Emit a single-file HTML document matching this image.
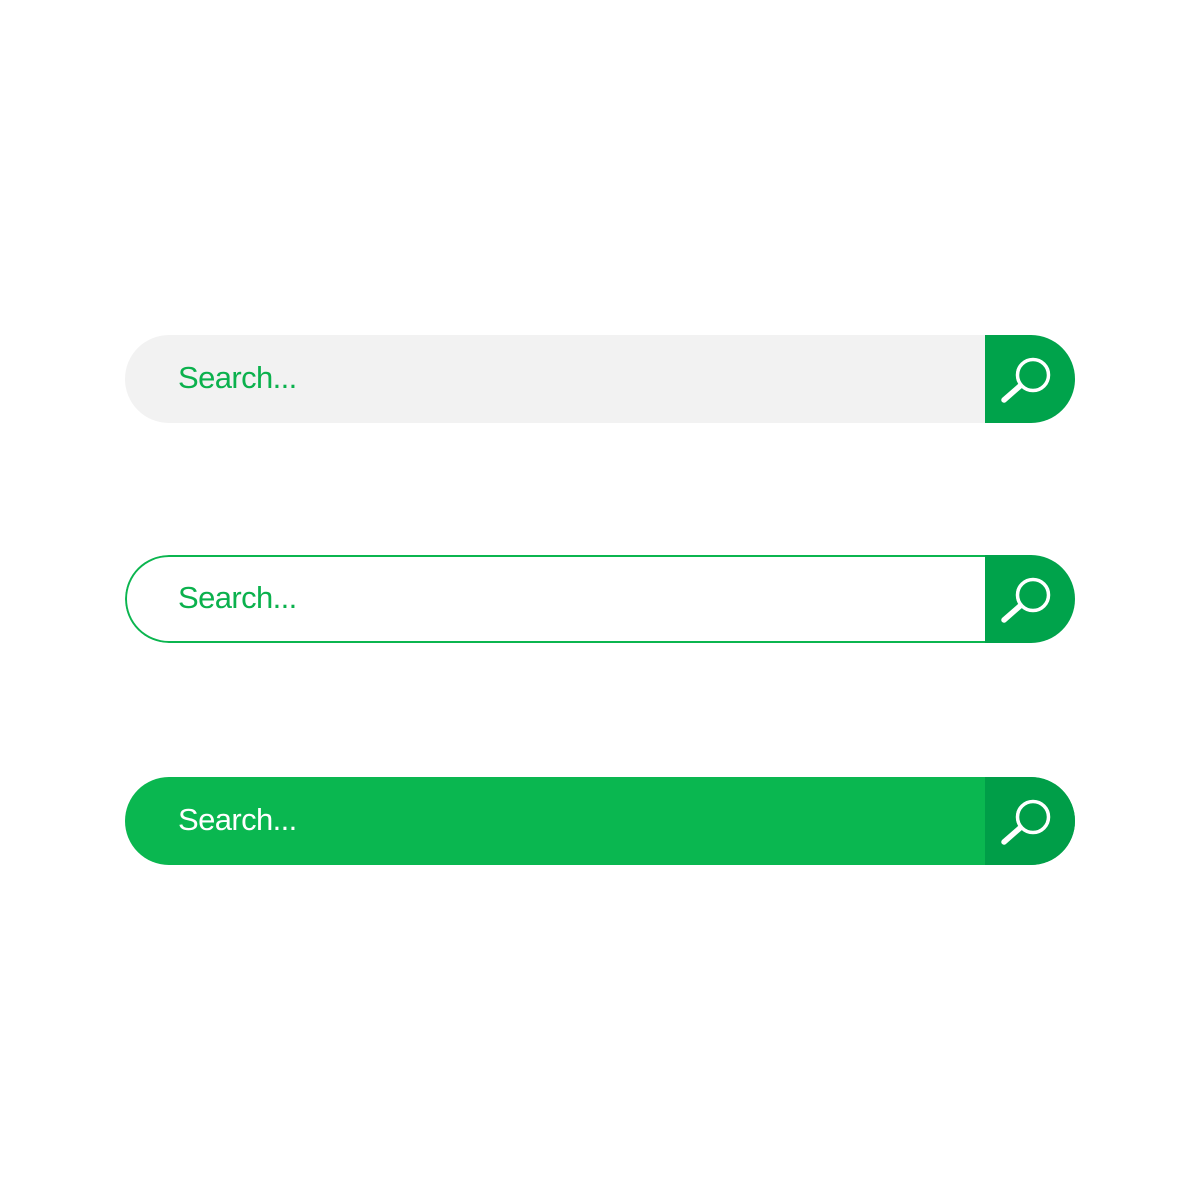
<!DOCTYPE html>
<html><head><style>
body{margin:0;width:1200px;height:1200px;background:#fff;position:relative;font-family:"Liberation Sans",sans-serif}
.bar{position:absolute;left:125px;width:950px;height:88px;border-radius:44px;overflow:hidden;box-sizing:border-box}
.t{position:absolute;left:53px;top:23px;font-size:31px;line-height:40px;letter-spacing:-0.6px}
.btn{position:absolute;right:0;top:0;width:90px;height:100%;background:#00a34b}
.btn svg{position:absolute;left:0;top:0}
.ol{position:absolute;left:0;top:0;width:862px;height:88px;box-sizing:border-box;border:2px solid #0bb54f;border-right:none;border-radius:44px 0 0 44px}
</style></head><body>
<div class="bar" style="top:335px;background:#f2f2f2"><span class="t" style="color:#0bb14d">Search...</span>
<div class="btn"><svg width="90" height="88"><circle cx="48" cy="40" r="15.5" fill="none" stroke="#fff" stroke-width="3.5"/><line x1="19" y1="65" x2="35" y2="51" stroke="#fff" stroke-width="5.5" stroke-linecap="round"/></svg></div></div>
<div class="bar" style="top:555px;background:#fff"><div class="ol"></div><span class="t" style="color:#0bb14d">Search...</span>
<div class="btn"><svg width="90" height="88"><circle cx="48" cy="40" r="15.5" fill="none" stroke="#fff" stroke-width="3.5"/><line x1="19" y1="65" x2="35" y2="51" stroke="#fff" stroke-width="5.5" stroke-linecap="round"/></svg></div></div>
<div class="bar" style="top:777px;background:#0ab750"><span class="t" style="color:#fff">Search...</span>
<div class="btn" style="background:#009e48"><svg width="90" height="88"><circle cx="48" cy="40" r="15.5" fill="none" stroke="#fff" stroke-width="3.5"/><line x1="19" y1="65" x2="35" y2="51" stroke="#fff" stroke-width="5.5" stroke-linecap="round"/></svg></div></div>
</body></html>
